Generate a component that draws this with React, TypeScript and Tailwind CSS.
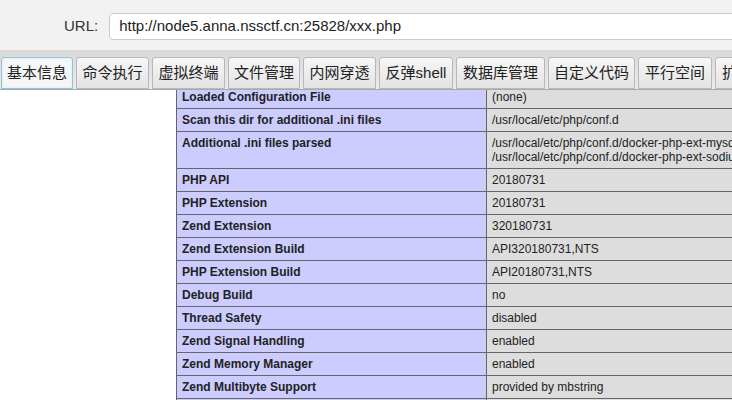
import React from "react";

const tabs = [
  { label: "基本信息", w: "w-[72px]", active: true },
  { label: "命令执行", w: "w-[73px]" },
  { label: "虚拟终端", w: "w-[73px]" },
  { label: "文件管理", w: "w-[72px]" },
  { label: "内网穿透", w: "w-[73px]" },
  { label: "反弹shell", w: "w-[74px]" },
  { label: "数据库管理", w: "w-[89px]" },
  { label: "自定义代码", w: "w-[87px]" },
  { label: "平行空间", w: "w-[74px]" },
  { label: "扩展功能", w: "w-[74px]" },
];

const rows: [string, React.ReactNode][] = [
  ["Loaded Configuration File", "(none)"],
  ["Scan this dir for additional .ini files", "/usr/local/etc/php/conf.d"],
  [
    "Additional .ini files parsed",
    <>
      /usr/local/etc/php/conf.d/docker-php-ext-mysqli.ini,
      <br />
      /usr/local/etc/php/conf.d/docker-php-ext-sodium.ini
    </>,
  ],
  ["PHP API", "20180731"],
  ["PHP Extension", "20180731"],
  ["Zend Extension", "320180731"],
  ["Zend Extension Build", "API320180731,NTS"],
  ["PHP Extension Build", "API20180731,NTS"],
  ["Debug Build", "no"],
  ["Thread Safety", "disabled"],
  ["Zend Signal Handling", "enabled"],
  ["Zend Memory Manager", "enabled"],
  ["Zend Multibyte Support", "provided by mbstring"],
  ["IPv6 Support", "enabled"],
];

export default function App() {
  return (
    <div className="w-[732px] h-[400px] overflow-hidden bg-white font-['Liberation_Sans','Noto_Sans_CJK_SC',sans-serif]">
      {/* URL bar */}
      <div className="h-[50px] bg-[#f2f2f2] flex items-start pt-[13px]">
        <span className="ml-[64px] mt-[4px] text-[15px] leading-[18px] text-[#333]">URL:</span>
        <div className="ml-[11px] h-[27px] flex-1 -mr-[20px] bg-white border border-[#cccccc] rounded-[4px] flex items-center pl-[9px] text-[15px] text-[#222] whitespace-nowrap">
          http://node5.anna.nssctf.cn:25828/xxx.php
        </div>
      </div>

      {/* tabs */}
      <div className="h-[40px] bg-gradient-to-b from-[#d9d9d9] to-[#ebebeb] pt-[7px] border-b border-[#a9a9a9] flex whitespace-nowrap">
        {tabs.map((t, i) => (
          <div
            key={i}
            className={`${t.w} shrink-0 h-[32px] ${i === 0 ? "ml-[1px]" : "ml-[3px]"} rounded-t-[3px] border flex items-center justify-center text-[15px] text-[#222] ${
              t.active
                ? "border-[#8fc3df] bg-[#f4f6f8] shadow-[inset_0_0_2px_#cfe6f3]"
                : "border-[#b8b8b8] bg-gradient-to-b from-[#f7f7f7] to-[#e3e3e3]"
            }`}
          >
            {t.label}
          </div>
        ))}
      </div>

      {/* phpinfo content */}
      <div className="h-[310px] overflow-hidden">
        <table className="ml-[176px] -mt-[5px] w-[934px] border-collapse text-[12px] leading-[14px] text-[#222]">
          <tbody>
            {rows.map(([k, v], i) => (
              <tr key={i}>
                <td className="w-[310px] bg-[#ccccff] border border-[#666] px-[5px] py-[4px] font-bold align-baseline">{k}</td>
                <td className="bg-[#dddddd] border border-[#666] px-[5px] py-[4px] align-baseline whitespace-nowrap">{v}</td>
              </tr>
            ))}
          </tbody>
        </table>
      </div>
    </div>
  );
}
